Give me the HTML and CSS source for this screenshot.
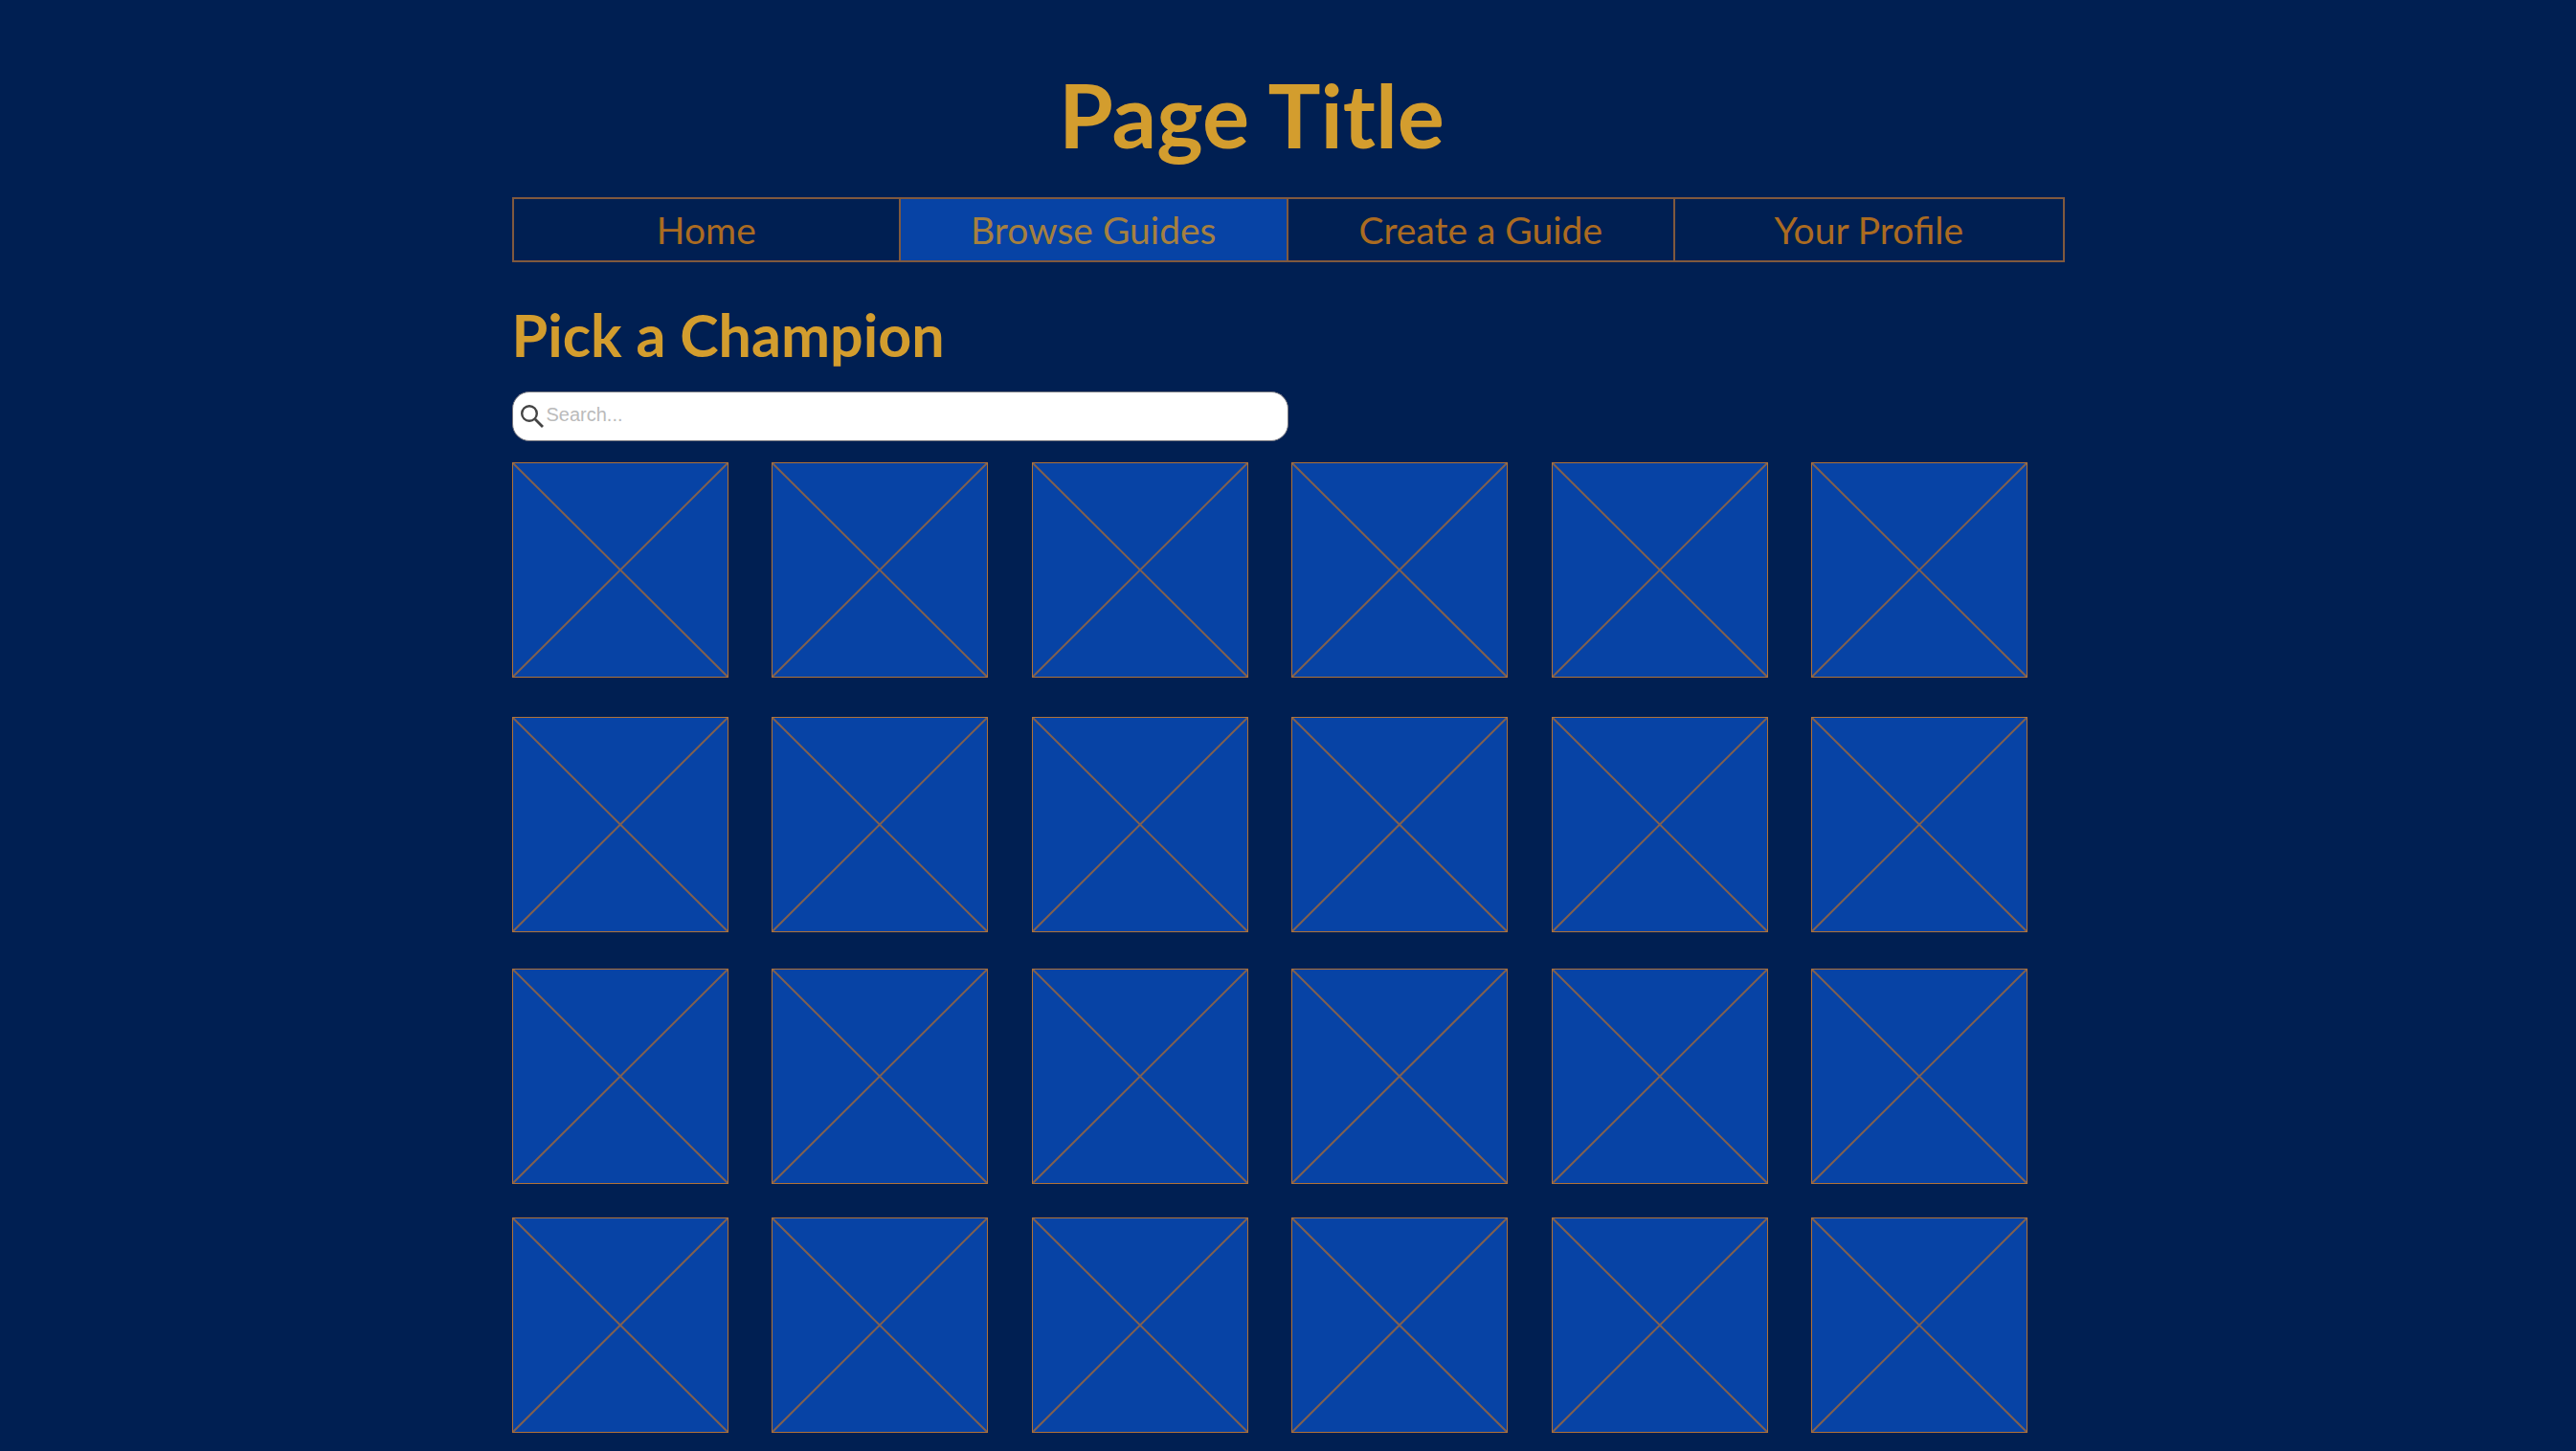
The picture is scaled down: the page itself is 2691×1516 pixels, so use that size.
FILE: index.html
```html
<!DOCTYPE html>
<html lang="en">
<head>
<meta charset="utf-8">
<meta name="viewport" content="width=device-width, initial-scale=1">
<title>Browse Guides</title>
<link rel="stylesheet" href="styles.css">
</head>
<body>
<div class="page">
  <header class="header">
    <h1 class="title">Page Title</h1>
  </header>
  <nav class="nav">
    <a class="nav-link" href="#home">Home</a>
    <a class="nav-link current" href="#browse" aria-current="page">Browse Guides</a>
    <a class="nav-link" href="#create">Create a Guide</a>
    <a class="nav-link" href="#profile">Your Profile</a>
  </nav>
  <main>
    <h2 class="heading">Pick a Champion</h2>
    <label class="search">
      <svg class="search-icon" viewBox="0 0 24 24" aria-hidden="true"><circle cx="9" cy="9" r="7.800" fill="none" stroke="currentColor" stroke-width="2.400"/><path d="M15 16l1-1 7 7-1 1z" fill="currentColor" stroke="currentColor" stroke-width="1.400"/></svg>
      <input class="search-input" type="text" placeholder="Search..." aria-label="Search champions">
    </label>
    <div class="champions" id="champions"></div>
  </main>
</div>
<script src="champions.js"></script>
</body>
</html>
```
FILE: styles.css
```css
* {
  box-sizing: border-box;
}

body {
  margin: 0;
  background: #001f52;
  font-family: Lato, "Open Sans", sans-serif;
}

.page {
  max-width: 1622px;
  margin: 0 auto;
  padding-top: 63px;
}

.header {
  padding-right: 76px;
  text-align: center;
}

.title,
.heading {
  margin: 0;
  color: #d39d2e;
  font-weight: 700;
}

.title {
  font-size: 92px;
  line-height: 114px;
}

.nav {
  display: grid;
  grid-template-columns: repeat(4, 1fr);
  margin-top: 29px;
  border: 2px solid #80593e;
}

.nav-link {
  color: #ab6b21;
  font-size: 39px;
  line-height: 64px;
  text-align: center;
  text-decoration: none;
}

.nav-link:not(:last-child) {
  border-right: 2px solid #80593e;
}

.nav-link.current {
  background: #0743a5;
  color: #a58040;
}

.heading {
  margin-top: 36px;
  font-size: 61px;
  line-height: 80px;
}

.search {
  display: flex;
  align-items: center;
  gap: 3px;
  width: 50%;
  height: 52px;
  margin-top: 19px;
  padding: 0 8px;
  border: 1px solid #77777f;
  border-radius: 18px;
  background: #fff;
}

.search-icon {
  flex: none;
  width: 24px;
  height: 24px;
  color: #444;
}

.search-input {
  flex: 1;
  min-width: 0;
  padding: 0 0 4px;
  border: 0;
  outline: 0;
  background: none;
  color: #333;
  font: 20px "Liberation Sans", sans-serif;
}

.search-input::placeholder {
  color: #bbb;
}

.champions {
  display: grid;
  grid-template-columns: repeat(6, 226px);
  grid-template-rows: 266px 263px 260px 225px;
  justify-content: space-between;
  align-items: start;
  margin-top: 22px;
  padding-right: 38px;
}

.champion {
  display: block;
  height: 225px;
  border: 1px solid #b07238;
  background: #0743a5;
}

.cross {
  display: block;
  width: 100%;
  height: 100%;
  stroke: #806050;
  stroke-width: 2;
}
```
FILE: champions.js
```js
const grid = document.getElementById("champions");
for (let i = 1; i <= 24; i++) {
  const link = document.createElement("a");
  link.className = "champion";
  link.href = "#champion-" + i;
  link.setAttribute("aria-label", "Champion " + i);
  link.innerHTML =
    '<svg class="cross" viewBox="0 0 100 100" preserveAspectRatio="none" aria-hidden="true">' +
    '<path d="M0 0L100 100M100 0L0 100" vector-effect="non-scaling-stroke"/></svg>';
  grid.append(link);
}
```
